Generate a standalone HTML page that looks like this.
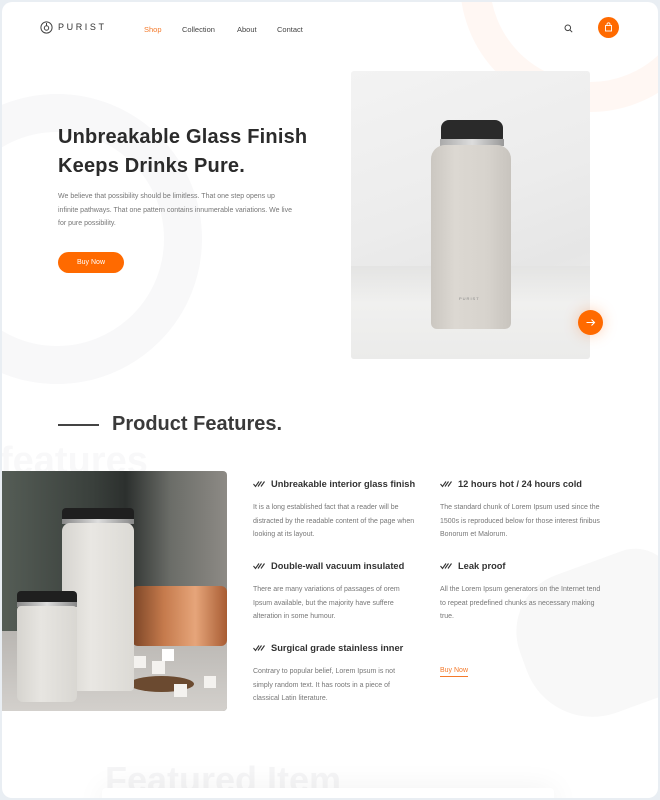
<!DOCTYPE html>
<html><head><meta charset="utf-8"><style>
*{margin:0;padding:0;box-sizing:border-box}
body{width:660px;height:800px;background:#e9eef3;font-family:"Liberation Sans",sans-serif;overflow:hidden;position:relative}
.card{position:absolute;left:2px;top:2px;width:656px;height:796px;background:#fff;border-radius:10px;overflow:hidden}
.abs{position:absolute}
.nav a{position:absolute;top:23px;font-size:7.5px;color:#444;text-decoration:none}
h1{position:absolute;left:56px;top:121px;font-size:20px;line-height:29px;color:#2b2b2b;font-weight:bold;letter-spacing:.2px}
.p{font-size:7px;color:#777;line-height:13.5px}
.ft{position:absolute;font-size:9.3px;font-weight:bold;color:#333}
.ft svg{position:absolute;left:0;top:1px}
.ft span{position:absolute;left:18px;top:0;white-space:nowrap}
.fb{position:absolute;font-size:7px;color:#777;line-height:13.6px;width:162px}
</style></head><body>
<div class="card">
 <div class="abs" style="left:-90px;top:92px;width:290px;height:290px;border-radius:50%;border:38px solid #f8f8f9"></div>
 <div class="abs" style="left:458px;top:-150px;width:260px;height:260px;border-radius:50%;border:30px solid #fff7f3"></div>
 <div class="abs" style="left:518px;top:560px;width:170px;height:150px;border-radius:60px 40px 40px 70px;background:#f8f8f8;transform:rotate(-20deg)"></div>
 <svg class="abs" style="left:38px;top:19px" width="13" height="13" viewBox="0 0 13 13"><circle cx="6.5" cy="6.5" r="5.6" fill="none" stroke="#444" stroke-width="1"/><circle cx="6.5" cy="7" r="2.2" fill="none" stroke="#444" stroke-width="1"/><path d="M6.5 2v2.5" stroke="#444"/></svg>
 <div class="abs" style="left:56px;top:20px;font-size:9px;letter-spacing:2.6px;color:#333">PURIST</div>
 <div class="nav"><a style="left:142px;color:#f47a2b">Shop</a><a style="left:180px">Collection</a><a style="left:235px">About</a><a style="left:275px">Contact</a></div>
 <svg class="abs" style="left:562px;top:22px" width="9" height="9" viewBox="0 0 9 9"><circle cx="3.8" cy="3.8" r="2.8" fill="none" stroke="#444" stroke-width="1"/><path d="M6 6l2.2 2.2" stroke="#444" stroke-width="1"/></svg>
 <div class="abs" style="left:596px;top:15px;width:21px;height:21px;border-radius:50%;background:#ff6a00"></div>
 <svg class="abs" style="left:602px;top:20px" width="9" height="10" viewBox="0 0 9 10"><rect x="1.5" y="3.5" width="6" height="5.5" fill="none" stroke="#fff" stroke-width=".9"/><path d="M3 3.5V2.3a1.5 1.5 0 0 1 3 0v1.2" fill="none" stroke="#fff" stroke-width=".9"/></svg>
 <h1>Unbreakable Glass Finish<br>Keeps Drinks Pure.</h1>
 <div class="abs p" style="left:56px;top:188px;width:238px">We believe that possibility should be limitless. That one step opens up infinite pathways. That one pattern contains innumerable variations. We live for pure possibility.</div>
 <div class="abs" style="left:56px;top:250px;width:66px;height:21px;border-radius:11px;background:#ff6a00;color:#fff;font-size:7px;text-align:center;line-height:21px">Buy Now</div>
 <div class="abs" style="left:349px;top:69px;width:239px;height:288px;border-radius:3px;overflow:hidden;background:linear-gradient(160deg,#f3f3f3 0%,#ececec 45%,#e6e6e6 70%,#f1f1f0 100%)">
  <div class="abs" style="left:0;top:195px;width:239px;height:93px;background:linear-gradient(180deg,#e4e4e3,#f0f0ef 40%,#ebebea)"></div>
  <div class="abs" style="left:90px;top:49px;width:62px;height:20px;border-radius:8px 8px 2px 2px;background:#2a2a2a"></div>
  <div class="abs" style="left:89px;top:68px;width:64px;height:7px;background:linear-gradient(90deg,#aaa,#ddd,#999)"></div>
  <div class="abs" style="left:80px;top:74px;width:80px;height:184px;border-radius:14px 14px 6px 6px;background:linear-gradient(90deg,#cbc7c1,#dcd8d2 30%,#d7d3cd 70%,#c8c4be)"></div>
  <div class="abs" style="left:108px;top:225px;font-size:4px;letter-spacing:1px;color:#888">PURIST</div>
 </div>
 <div class="abs" style="left:576px;top:308px;width:25px;height:25px;border-radius:50%;background:#ff6a00;box-shadow:0 0 14px rgba(255,120,40,.35)"></div>
 <svg class="abs" style="left:582px;top:314px" width="13" height="13" viewBox="0 0 13 13"><path d="M2.5 6.5h8M7.5 3.5l3 3-3 3" fill="none" stroke="#fff" stroke-width="1.1"/></svg>
 <div class="abs" style="left:56px;top:422px;width:41px;height:1.5px;background:#444"></div>
 <div class="abs" style="left:110px;top:411px;font-size:20px;font-weight:bold;color:#3a3a3a">Product Features.</div>
 <div class="abs" style="left:-2px;top:438px;font-size:38px;font-weight:bold;color:#f8f8f9">features</div>
 <div class="abs" style="left:0;top:469px;width:225px;height:240px;border-radius:0 4px 4px 0;overflow:hidden;background:linear-gradient(90deg,#555d56 0%,#3a403c 40%,#2c302e 55%,#6b6d68 75%,#8d8a85 100%)">
  <div class="abs" style="left:0;top:160px;width:225px;height:80px;background:linear-gradient(180deg,#b9b6b2,#d3d0cc)"></div>
  <div class="abs" style="left:130px;top:115px;width:95px;height:60px;border-radius:6px;background:linear-gradient(90deg,#7a4426,#c57a4c,#e6a57a,#a85c33)"></div>
  <div class="abs" style="left:127px;top:205px;width:65px;height:16px;border-radius:50%;background:#6b4a30"></div>
  <div class="abs" style="left:132px;top:185px;width:12px;height:12px;background:#f4f2ef"></div>
  <div class="abs" style="left:150px;top:190px;width:13px;height:13px;background:#f4f2ef"></div>
  <div class="abs" style="left:160px;top:178px;width:12px;height:12px;background:#fff"></div>
  <div class="abs" style="left:202px;top:205px;width:12px;height:12px;background:#f4f2ef"></div>
  <div class="abs" style="left:172px;top:213px;width:13px;height:13px;background:#f4f2ef"></div>
  <div class="abs" style="left:60px;top:37px;width:72px;height:12px;border-radius:4px 4px 0 0;background:#1f1f1f"></div>
  <div class="abs" style="left:60px;top:48px;width:72px;height:5px;background:linear-gradient(90deg,#888,#ddd,#888)"></div>
  <div class="abs" style="left:60px;top:52px;width:72px;height:168px;border-radius:8px 8px 4px 4px;background:linear-gradient(90deg,#d6d4cf,#e9e7e3 40%,#dcdad5)"></div>
  <div class="abs" style="left:15px;top:120px;width:60px;height:12px;border-radius:4px 4px 0 0;background:#1f1f1f"></div>
  <div class="abs" style="left:15px;top:131px;width:60px;height:5px;background:linear-gradient(90deg,#888,#ddd,#888)"></div>
  <div class="abs" style="left:15px;top:135px;width:60px;height:96px;border-radius:4px 4px 6px 6px;background:linear-gradient(90deg,#d6d4cf,#e7e5e1 40%,#d9d7d2)"></div>
 </div>
 <div class="ft" style="left:251px;top:477px"><svg width="12" height="8" viewBox="0 0 12 8"><path d="M.5 4l2 2.5L6 1.5M5 6.5L8.5 1.5M8 6.5L11.5 1.5" fill="none" stroke="#333" stroke-width="1.1"/></svg><span>Unbreakable interior glass finish</span></div>
 <div class="fb" style="left:251px;top:499px">It is a long established fact that a reader will be distracted by the readable content of the page when looking at its layout.</div>
 <div class="ft" style="left:438px;top:477px"><svg width="12" height="8" viewBox="0 0 12 8"><path d="M.5 4l2 2.5L6 1.5M5 6.5L8.5 1.5M8 6.5L11.5 1.5" fill="none" stroke="#333" stroke-width="1.1"/></svg><span>12 hours hot / 24 hours cold</span></div>
 <div class="fb" style="left:438px;top:499px">The standard chunk of Lorem Ipsum used since the 1500s is reproduced below for those interest finibus Bonorum et Malorum.</div>
 <div class="ft" style="left:251px;top:559px"><svg width="12" height="8" viewBox="0 0 12 8"><path d="M.5 4l2 2.5L6 1.5M5 6.5L8.5 1.5M8 6.5L11.5 1.5" fill="none" stroke="#333" stroke-width="1.1"/></svg><span>Double-wall vacuum insulated</span></div>
 <div class="fb" style="left:251px;top:581px">There are many variations of passages of orem Ipsum available, but the majority have suffere alteration in some humour.</div>
 <div class="ft" style="left:438px;top:559px"><svg width="12" height="8" viewBox="0 0 12 8"><path d="M.5 4l2 2.5L6 1.5M5 6.5L8.5 1.5M8 6.5L11.5 1.5" fill="none" stroke="#333" stroke-width="1.1"/></svg><span>Leak proof</span></div>
 <div class="fb" style="left:438px;top:581px">All the Lorem Ipsum generators on the Internet tend to repeat predefined chunks as necessary making true.</div>
 <div class="ft" style="left:251px;top:641px"><svg width="12" height="8" viewBox="0 0 12 8"><path d="M.5 4l2 2.5L6 1.5M5 6.5L8.5 1.5M8 6.5L11.5 1.5" fill="none" stroke="#333" stroke-width="1.1"/></svg><span>Surgical grade stainless inner</span></div>
 <div class="fb" style="left:251px;top:663px">Contrary to popular belief, Lorem Ipsum is not simply random text. It has roots in a piece of classical Latin literature.</div>
 <div class="abs" style="left:438px;top:665px;font-size:7px;color:#f47a2b;border-bottom:1px solid #f47a2b;padding-bottom:2px">Buy Now</div>
 <div class="abs" style="left:103px;top:757px;font-size:36px;font-weight:bold;color:#f5f5f6">Featured Item</div>
 <div class="abs" style="left:100px;top:786px;width:452px;height:30px;background:#fff;border-radius:4px;box-shadow:0 0 30px rgba(0,0,0,.06)"></div>
</div>
</body></html>
